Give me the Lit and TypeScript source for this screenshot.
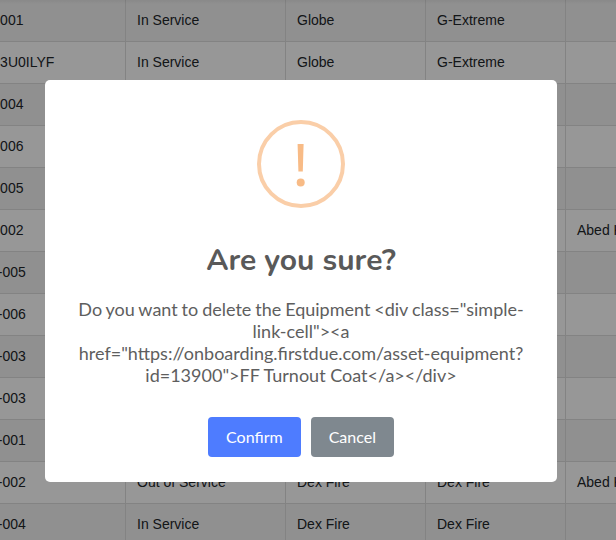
import { LitElement, html, css } from "lit";
import { customElement } from "lit/decorators.js";

interface Row { id: string; status: string; brand: string; model: string; owner: string; }

const rows: Row[] = [
  { id: "GL-0001", status: "In Service", brand: "Globe", model: "G-Extreme", owner: "" },
  { id: "GL-03U0ILYF", status: "In Service", brand: "Globe", model: "G-Extreme", owner: "" },
  { id: "GL-0004", status: "In Service", brand: "Globe", model: "G-Extreme", owner: "" },
  { id: "GL-0006", status: "In Service", brand: "Globe", model: "G-Extreme", owner: "" },
  { id: "GL-0005", status: "In Service", brand: "Globe", model: "G-Extreme", owner: "" },
  { id: "GL-0002", status: "In Service", brand: "Globe", model: "G-Extreme", owner: "Abed Kassis" },
  { id: "DEX-005", status: "In Service", brand: "Dex Fire", model: "Dex Fire", owner: "" },
  { id: "DEX-006", status: "In Service", brand: "Dex Fire", model: "Dex Fire", owner: "" },
  { id: "DEX-003", status: "In Service", brand: "Dex Fire", model: "Dex Fire", owner: "" },
  { id: "DEX-003", status: "In Service", brand: "Dex Fire", model: "Dex Fire", owner: "" },
  { id: "DEX-001", status: "In Service", brand: "Dex Fire", model: "Dex Fire", owner: "" },
  { id: "DEX-002", status: "Out of Service", brand: "Dex Fire", model: "Dex Fire", owner: "Abed Kassis" },
  { id: "DEX-004", status: "In Service", brand: "Dex Fire", model: "Dex Fire", owner: "" },
];

@customElement("app-root")
export class AppRoot extends LitElement {
  static styles = css`
    :host {
      display: block;
      width: 616px;
      height: 540px;
      overflow: hidden;
      position: relative;
      background: #fff;
    }
    .list {
      display: grid;
      grid-template-columns: 168px 160px 140px 140px 180px;
      grid-auto-rows: 42px;
      margin-left: -42px;
      width: 788px;
      font: 14px "Liberation Sans", Arial, sans-serif;
      color: #212529;
    }
    .row { display: contents; }
    .row:nth-child(odd) .cell { background: #f1f1f1; }
    .row:nth-child(even) .cell { background: #fcfcfc; }
    .cell {
      display: flex;
      align-items: center;
      padding: 0 12px 2px 11px;
      box-sizing: border-box;
      border-right: 1px solid #dbdbdb;
      border-bottom: 1px solid #dbdbdb;
      white-space: nowrap;
      overflow: hidden;
    }
    .backdrop {
      position: absolute;
      inset: 0;
      background: linear-gradient(rgba(0, 0, 0, 0.05), rgba(0, 0, 0, 0) 4px), rgba(0, 0, 0, 0.4);
      display: flex;
      justify-content: center;
      align-items: flex-start;
      padding: 80px 14px 0 0;
      box-sizing: border-box;
    }
    .modal {
      width: 512px;
      height: 402px;
      box-sizing: border-box;
      background: #fff;
      border-radius: 5px;
      padding: 40px 20px 0;
      display: flex;
      flex-direction: column;
      align-items: center;
      text-align: center;
    }
    .icon {
      display: block;
      width: 88px;
      height: 88px;
      flex: none;
    }
    h2 {
      margin: 30px 0 0;
      font: 700 30px/45px "Nunito", "Lato", sans-serif;
      color: #595959;
    }
    p {
      margin: 15px 0 0;
      font: 400 18px/22px "Lato", sans-serif;
      color: #5e5e5e;
      white-space: nowrap;
    }
    p::first-line { word-spacing: -0.7px; }
    .actions {
      display: flex;
      gap: 10px;
      margin-top: 31px;
    }
    button {
      height: 40px;
      border: 0;
      border-radius: 4px;
      padding: 0 18px 2px;
      font: 400 16px "Lato", sans-serif;
      color: #fff;
    }
    .confirm { background: #4e7cff; }
    .cancel { background: #7f888f; }
  `;

  render() {
    return html`
      <div class="list">
        ${rows.map(
          (r) => html`
            <div class="row">
              <div class="cell">${r.id}</div>
              <div class="cell">${r.status}</div>
              <div class="cell">${r.brand}</div>
              <div class="cell">${r.model}</div>
              <div class="cell">${r.owner}</div>
            </div>
          `
        )}
      </div>
      <div class="backdrop">
        <div class="modal" role="dialog">
          <svg class="icon" viewBox="0 0 88 88" aria-hidden="true">
            <circle cx="44" cy="44" r="42" fill="none" stroke="#facea8" stroke-width="4"></circle>
            <path d="M40.6 24h6l-.8 27.5h-4.4z" fill="#f8bb86"></path>
            <circle cx="43.7" cy="62.6" r="4" fill="#f8bb86"></circle>
          </svg>
          <h2>Are you sure?</h2>
          <p>Do you want to delete the Equipment &lt;div class="simple-<br />link-cell"&gt;&lt;a<br />href="https://onboarding.firstdue.com/asset-equipment?<br />id=13900"&gt;FF Turnout Coat&lt;/a&gt;&lt;/div&gt;</p>
          <div class="actions">
            <button class="confirm">Confirm</button>
            <button class="cancel">Cancel</button>
          </div>
        </div>
      </div>
    `;
  }
}
